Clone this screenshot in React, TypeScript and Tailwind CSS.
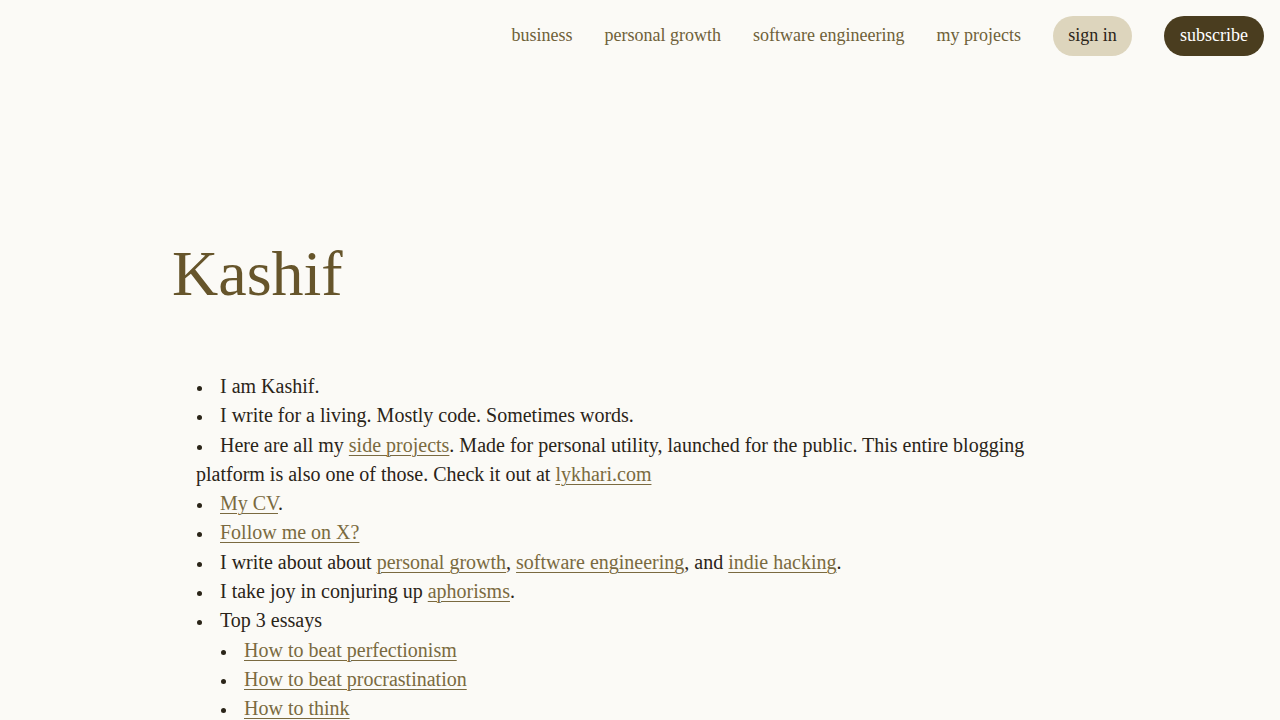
import React from "react";

const font = { fontFamily: '"Liberation Serif", "DejaVu Serif", serif' };

function A({ children }: { children: React.ReactNode }) {
  return (
    <a href="#" className="text-[#7a6a40] underline decoration-1 underline-offset-[3px]">
      {children}
    </a>
  );
}

function Li({ children, nested = false }: { children: React.ReactNode; nested?: boolean }) {
  return (
    <li className={nested ? "pl-6" : ""}>
      <span className="mr-[18px] ml-[1px] inline-block h-[5px] w-[5px] rounded-full bg-[#2a2418] align-middle" />
      {children}
    </li>
  );
}

export default function App() {
  return (
    <div className="min-h-[720px] bg-[#fbfaf6] text-[#2a2418]" style={font}>
      <header className="flex items-center justify-end gap-8 pr-4 pt-4 text-[18px] text-[#6f6139]">
        <a href="#" className="-mt-[2px]">business</a>
        <a href="#" className="-mt-[2px]">personal growth</a>
        <a href="#" className="-mt-[2px]">software engineering</a>
        <a href="#" className="-mt-[2px]">my projects</a>
        <button className="h-10 w-[79px] rounded-full bg-[#ddd5bd] pb-[2px] text-[#2a2418]">sign in</button>
        <button className="h-10 w-[100px] rounded-full bg-[#4a3d1f] pb-[2px] text-white">subscribe</button>
      </header>
      <main className="ml-[172px] w-[900px] pt-[186px]">
        <h1 className="text-[64px] leading-none text-[#66552b]">Kashif</h1>
        <ul className="mt-[66px] pl-6 text-[20px] leading-[29.3px]">
          <Li>I am Kashif.</Li>
          <Li>I write for a living. Mostly code. Sometimes words.</Li>
          <Li>
            Here are all my <A>side projects</A>. Made for personal utility, launched for the public. This entire blogging
            platform is also one of those. Check it out at <A>lykhari.com</A>
          </Li>
          <Li>
            <A>My CV</A>.
          </Li>
          <Li>
            <A>Follow me on X?</A>
          </Li>
          <Li>
            I write about about <A>personal growth</A>, <A>software engineering</A>, and <A>indie hacking</A>.
          </Li>
          <Li>
            I take joy in conjuring up <A>aphorisms</A>.
          </Li>
          <Li>Top 3 essays</Li>
          <Li nested>
            <A>How to beat perfectionism</A>
          </Li>
          <Li nested>
            <A>How to beat procrastination</A>
          </Li>
          <Li nested>
            <A>How to think</A>
          </Li>
        </ul>
      </main>
    </div>
  );
}
